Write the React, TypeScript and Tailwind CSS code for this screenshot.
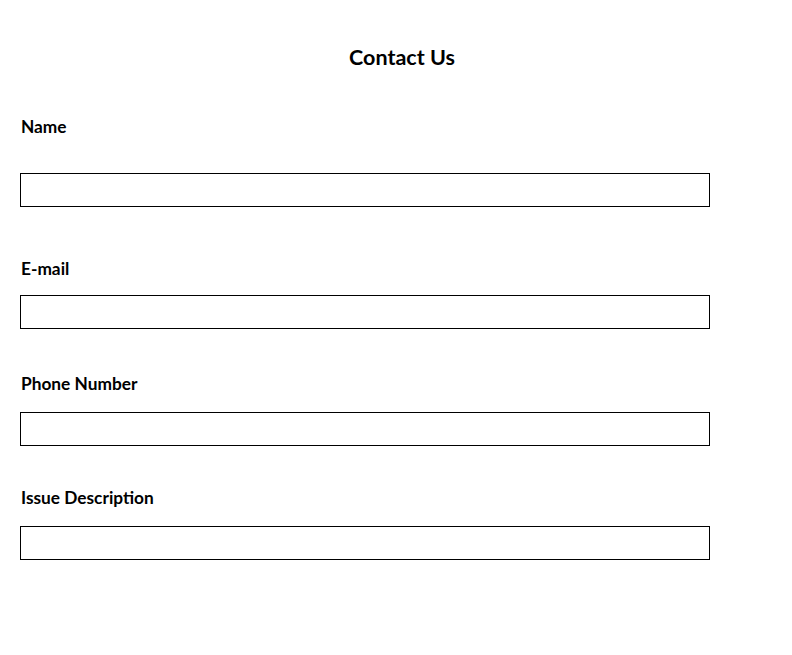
const fields = [
  { label: "Name", labelMt: "mt-[44px]", inputMt: "mt-[34px]" },
  { label: "E-mail", labelMt: "mt-[50px]", inputMt: "mt-[14px]" },
  { label: "Phone Number", labelMt: "mt-[43px]", inputMt: "mt-[16px]" },
  { label: "Issue Description", labelMt: "mt-[40px]", inputMt: "mt-[16px]" },
];

export default function App() {
  return (
    <div className="min-h-[655px] w-[792px] bg-white pt-[43px] font-['Lato','Open_Sans',sans-serif] text-black">
      <h1 className="w-[804px] text-center text-[21.5px] font-bold leading-[28px]">Contact Us</h1>
      <form className="flex flex-col px-5">
        {fields.map((f) => (
          <div key={f.label} className="flex flex-col">
            <label className={`${f.labelMt} px-px text-[17.3px] font-bold leading-6`}>{f.label}</label>
            <input type="text" className={`${f.inputMt} h-[34px] w-[690px] border border-black bg-white outline-none`} />
          </div>
        ))}
      </form>
    </div>
  );
}
